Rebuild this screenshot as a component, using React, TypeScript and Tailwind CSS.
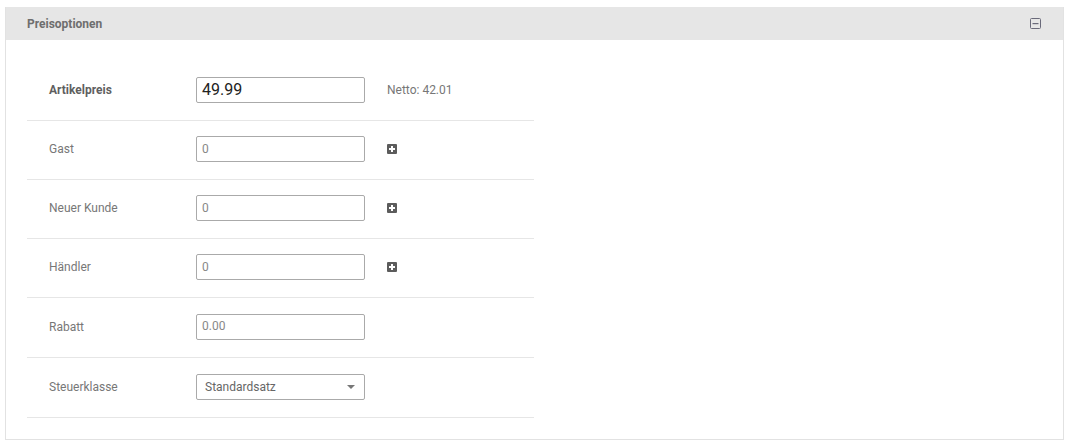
import React from 'react';

type Row = {
  label: string;
  value: string;
  bold?: boolean;
  extra?: 'netto' | 'plus' | 'select';
  h: string;
};

const rows: Row[] = [
  { label: 'Artikelpreis', value: '49.99', bold: true, extra: 'netto', h: 'h-[60px]' },
  { label: 'Gast', value: '0', extra: 'plus', h: 'h-[59px]' },
  { label: 'Neuer Kunde', value: '0', extra: 'plus', h: 'h-[59px]' },
  { label: 'Händler', value: '0', extra: 'plus', h: 'h-[59px]' },
  { label: 'Rabatt', value: '0.00', h: 'h-[60px]' },
  { label: 'Steuerklasse', value: 'Standardsatz', extra: 'select', h: 'h-[60px]' },
];

function PlusBox() {
  return (
    <svg width="10" height="10" viewBox="0 0 10 10" className="block">
      <rect x="0" y="0" width="10" height="10" rx="1" fill="#5c5c5c" />
      <rect x="4" y="2" width="2" height="6" fill="#fff" />
      <rect x="2" y="4" width="6" height="2" fill="#fff" />
    </svg>
  );
}

function MinusBox() {
  return (
    <svg width="11" height="11" viewBox="0 0 11 11" className="block">
      <rect x="0.5" y="0.5" width="10" height="10" rx="1" fill="none" stroke="#6a6a7a" />
      <rect x="2.5" y="5" width="6" height="1.2" fill="#6a6a7a" />
    </svg>
  );
}

export default function App() {
  return (
    <div className="min-h-[446px] bg-white pt-[7px] pl-[5px]" style={{ fontFamily: 'Roboto, "Liberation Sans", sans-serif' }}>
      <div className="w-[1059px] border border-[#e2e2e2] border-t-0">
        <div className="h-[33px] bg-[#e6e6e6] flex items-center justify-between pl-[21px] pr-[22px]">
          <span className="text-[12px] font-bold text-[#6e6e6e]">Preisoptionen</span>
          <MinusBox />
        </div>
        <div className="pt-[21px] pb-[21px] pl-[21px]">
          {rows.map((r) => (
            <div key={r.label} className={`w-[507px] ${r.h} pb-[2px] border-b border-[#e6e6e6] flex items-center`}>
              <div className={`w-[169px] pl-[22px] text-[12px] ${r.bold ? 'font-bold text-[#5f5f5f]' : 'text-[#777]'}`}>
                {r.label}
              </div>
              {r.extra === 'select' ? (
                <div className="w-[169px] h-[26px] border border-[#aaa] rounded-[2px] flex items-center justify-between pl-[8px] pr-[9px] text-[12px] text-[#666]">
                  <span>Standardsatz</span>
                  <span className="w-0 h-0 border-l-[4px] border-r-[4px] border-t-[4px] border-l-transparent border-r-transparent border-t-[#777]" />
                </div>
              ) : (
                <div className={`w-[169px] h-[26px] border border-[#aaa] rounded-[2px] flex pl-[5px] ${r.bold ? 'items-center text-[16px] text-[#222]' : 'items-center pb-[1px] text-[12px] text-[#888]'}`}>
                  {r.value}
                </div>
              )}
              {r.extra === 'netto' && <span className="ml-[22px] text-[12px] text-[#777]">Netto: 42.01</span>}
              {r.extra === 'plus' && (
                <span className="ml-[22px]">
                  <PlusBox />
                </span>
              )}
            </div>
          ))}
        </div>
      </div>
    </div>
  );
}
